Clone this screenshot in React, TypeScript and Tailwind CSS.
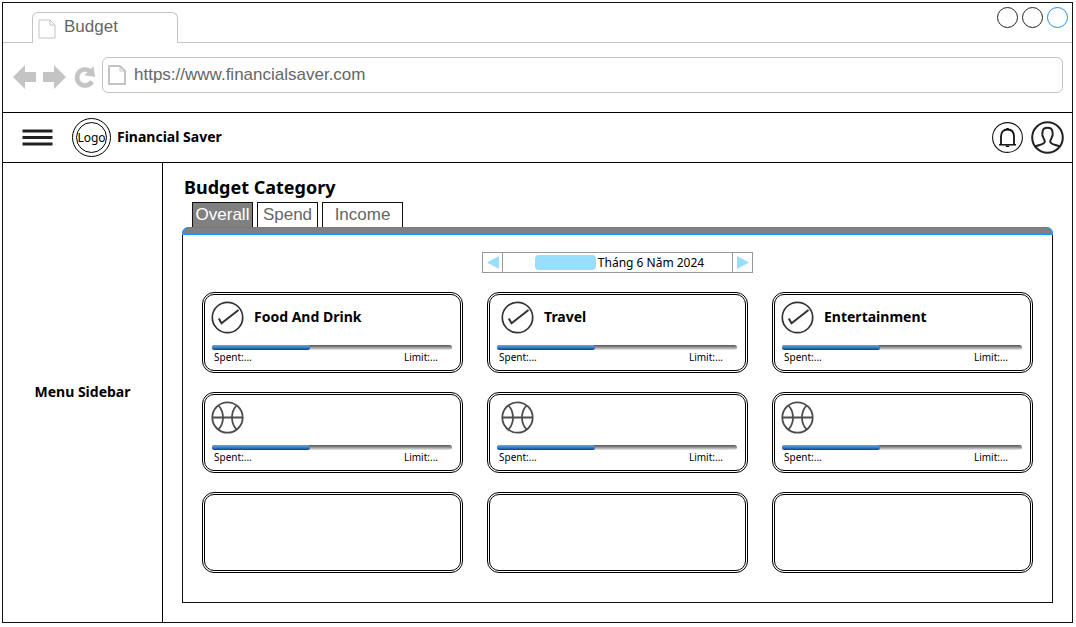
import type { ReactNode } from 'react';

type Category = { name: string; icon: 'check' | 'ball'; indented?: boolean; id: string };

const categories: Category[] = [
  { id: 'food', name: 'Food And Drink', icon: 'check' },
  { id: 'travel', name: 'Travel', icon: 'check', indented: true },
  { id: 'entertainment', name: 'Entertainment', icon: 'check' },
  { id: 'custom-1', name: '', icon: 'ball' },
  { id: 'custom-2', name: '', icon: 'ball', indented: true },
  { id: 'custom-3', name: '', icon: 'ball' },
];

const emptySlots = ['slot-1', 'slot-2', 'slot-3'];

function PageIcon({ className, strokeWidth }: { className: string; strokeWidth: number }) {
  return (
    <svg className={className} viewBox="0 0 18 20" fill="none" stroke="#c4c4c4" strokeWidth={strokeWidth} aria-hidden="true">
      <path d="M1 1H12L17 6V19H1Z" />
      <path d="M12 1V6H17" strokeWidth="1" />
    </svg>
  );
}

function CheckIcon() {
  return (
    <svg className="size-[33px] shrink-0" viewBox="0 0 33 33" fill="none" stroke="#333" strokeWidth="1.7" aria-hidden="true">
      <circle cx="16.5" cy="16.5" r="15.2" />
      <path d="M7.8 17.5L10.5 22.3L27.5 9" strokeWidth="2" />
    </svg>
  );
}

function BallIcon() {
  return (
    <svg className="size-[33px] shrink-0" viewBox="0 0 33 33" fill="none" stroke="#4d4d4d" strokeWidth="1.8" aria-hidden="true">
      <circle cx="16.5" cy="16.5" r="15.2" />
      <path d="M1 16.5H32M7.5 4.5C13.5 11 13.5 22 7.5 28.5M25.500 4.5C19.5 11 19.5 22 25.5 28.5" />
    </svg>
  );
}

function Card({ children }: { children?: ReactNode }) {
  return <li className="h-[81px] rounded-xl border-[3px] border-double border-black px-1.5 pt-1.5">{children}</li>;
}

function CategoryCard({ category }: { category: Category }) {
  return (
    <Card>
      <div className={category.indented ? 'flex items-center gap-2.5 pl-[5px]' : 'flex items-center gap-2.5'}>
        {category.icon === 'check' ? <CheckIcon /> : <BallIcon />}
        <h2 className="pb-0.5 text-sm font-bold">{category.name}</h2>
      </div>
      <div
        role="progressbar"
        aria-label="Spent"
        aria-valuenow={41}
        className="mt-[11px] mr-0.5 ml-px h-[5px] rounded-full bg-linear-to-b from-[#555] via-[#999] to-[#eee]"
      >
        <div className="h-full w-[41%] rounded-full bg-linear-to-b from-[#6aa5e4] via-[#3f7cc4] to-[#08408c]" />
      </div>
      <div className="mt-px flex justify-between pr-4 pl-[3px] text-[10px] leading-3">
        <span>Spent:...</span>
        <span>Limit:...</span>
      </div>
    </Card>
  );
}

function BrowserChrome() {
  return (
    <div className="text-[#666]">
      <div className="flex h-10 justify-between border-b border-[#c4c4c4] pl-[29px]">
        <div className="-mb-px mt-[9px] flex w-[146px] items-start gap-2 rounded-t-md border border-b-0 border-[#c4c4c4] bg-white pt-1 pl-[5px]">
          <PageIcon className="mt-0.5 h-5 w-[18px]" strokeWidth={1} />
          <span className="font-['Liberation_Sans',sans-serif] text-[17px] leading-5">Budget</span>
        </div>
        <div className="flex gap-1 pt-1 pr-1">
          <button aria-label="Minimize" className="size-[21px] rounded-full border border-[#222]" />
          <button aria-label="Maximize" className="size-[21px] rounded-full border border-[#222]" />
          <button aria-label="Close" className="size-[21px] rounded-full border border-[#1890ff]" />
        </div>
      </div>
      <div className="flex h-[69px] items-center pr-[9px] pb-1.5 pl-2.5">
        <button aria-label="Back" className="mt-1 mr-[7px]">
          <svg className="h-6 w-[23px]" viewBox="0 0 23 24" fill="#c4c4c4"><path d="M0 12L12 0V7H23V17H12V24Z" /></svg>
        </button>
        <button aria-label="Forward" className="mt-1 mr-2">
          <svg className="h-6 w-[23px]" viewBox="0 0 23 24" fill="#c4c4c4"><path d="M23 12L11 0V7H0V17H11V24Z" /></svg>
        </button>
        <button aria-label="Reload" className="mt-1 mr-1.5">
          <svg className="h-6 w-[22px]" viewBox="0 0 22 24" fill="none">
            <path d="M16 6.2A8 8 0 1 0 18 16.5" stroke="#c4c4c4" strokeWidth="4.6" />
            <path d="M19.500 1.200L21.200 12L10.500 10.200Z" fill="#c4c4c4" />
          </svg>
        </button>
        <label className="flex h-9 flex-1 items-center gap-2 rounded-md border border-[#c4c4c4] pl-[5px]">
          <PageIcon className="h-5 w-[18px]" strokeWidth={2} />
          <input
            aria-label="Address"
            className="w-full flex-1 font-['Liberation_Sans',sans-serif] text-[17px] leading-5 outline-none"
            defaultValue="https://www.financialsaver.com"
          />
        </label>
      </div>
    </div>
  );
}

function AppHeader() {
  return (
    <header className="flex h-[51px] items-center border-y border-black pr-2 pl-[19px]">
      <button aria-label="Menu" className="mr-[19px]">
        <svg className="h-[17px] w-[31px]" viewBox="0 0 31 17" fill="#222"><path d="M0.500 0.500H30.500V3.500H0.500ZM0.500 7H30.500V10H0.500ZM0.500 13.500H30.500V16.500H0.500Z" /></svg>
      </button>
      <div className="mr-1.5 flex size-[39px] items-center justify-center rounded-full border border-black">
        <div className="flex size-[31px] items-center justify-center rounded-full border border-black text-xs">Logo</div>
      </div>
      <span className="pb-0.5 text-sm font-bold">Financial Saver</span>
      <div className="ml-auto flex items-center gap-2">
        <button aria-label="Notifications">
          <svg className="size-[31px]" viewBox="0 0 31 31" fill="none" stroke="#111">
            <circle cx="15.500" cy="15.500" r="14.900" strokeWidth="1.100" />
            <path d="M7 22.800H24" strokeWidth="1.500" />
            <path d="M9 22.800V14.500C9 10 11.500 7.500 15.500 7.500S22 10 22 14.500V22.800" strokeWidth="1.800" />
            <path d="M14.300 6.800H16.700M13.800 24.200H17.200" strokeWidth="1.400" />
          </svg>
        </button>
        <button aria-label="Account">
          <svg className="size-[33px]" viewBox="0 0 33 33" fill="none" stroke="#222" strokeWidth="2">
            <circle cx="16.500" cy="16.500" r="15.300" />
            <path d="M4.500 25.500C7 23.500 13.800 24 13.800 20.500C13.800 18.500 12.200 18 12 15.500C10.800 14.500 11.300 13 11.500 11C11.700 8 13.500 6.800 16.500 6.800S21.300 8 21.500 11C21.700 13 22.200 14.500 21 15.500C20.800 18 19.200 18.500 19.200 20.500C19.200 24 26 23.500 28.500 25.500" />
          </svg>
        </button>
      </div>
    </header>
  );
}

function Tab({ label, width, selected = false }: { label: string; width: string; selected?: boolean }) {
  const tone = selected ? 'bg-[#808080] text-white' : 'bg-white text-[#666]';
  return (
    <button
      role="tab"
      aria-selected={selected}
      className={`${width} ${tone} h-[25px] border border-b-0 border-[#111] text-center font-['Liberation_Sans',sans-serif] text-[17px] leading-6`}
    >
      {label}
    </button>
  );
}

function MonthPicker() {
  return (
    <div className="mx-auto flex h-[21px] w-[271px] border border-[#999]">
      <button aria-label="Previous month" className="flex w-5 items-center justify-center border-r border-[#999]">
        <svg className="h-[13px] w-3" viewBox="0 0 12 12" preserveAspectRatio="none" fill="#99ddff"><path d="M0 6L12 0V12Z" /></svg>
      </button>
      <div className="flex flex-1 items-center justify-center gap-0.5 pl-1 text-xs">
        <span className="h-[15px] w-[61px] rounded bg-[#99ddff]" />
        <span>Tháng 6 Năm 2024</span>
      </div>
      <button aria-label="Next month" className="flex w-5 items-center justify-center border-l border-[#999]">
        <svg className="h-[13px] w-3" viewBox="0 0 12 12" preserveAspectRatio="none" fill="#99ddff"><path d="M12 6L0 0V12Z" /></svg>
      </button>
    </div>
  );
}

export default function App() {
  return (
    <div className="flex min-h-screen bg-white pt-0.5 pr-[3px] pb-1 pl-0.5 font-['Noto_Sans',sans-serif] text-black">
      <div className="flex flex-1 flex-col border border-[#111]">
        <BrowserChrome />
        <AppHeader />
        <div className="flex flex-1">
          <nav className="flex w-40 shrink-0 items-center justify-center border-r border-black pb-0.5 text-sm font-bold">
            Menu Sidebar
          </nav>
          <main className="flex flex-1 flex-col px-[19px] pt-[11px] pb-[19px]">
            <h1 className="pb-px pl-0.5 text-lg leading-[27px] font-bold">Budget Category</h1>
            <div role="tablist" className="flex gap-1 pl-2.5">
              <Tab label="Overall" width="w-[61px]" selected />
              <Tab label="Spend" width="w-[61px]" />
              <Tab label="Income" width="w-[81px]" />
            </div>
            <div className="h-2 rounded-t-md border border-[#1890ff] bg-[#808080]" />
            <section className="flex-1 border border-t-0 border-[#111] px-[19px] pt-[17px] pb-[29px]">
              <MonthPicker />
              <ul className="mt-[19px] grid grid-cols-3 gap-x-6 gap-y-[19px]">
                {categories.map((category) => (
                  <CategoryCard key={category.id} category={category} />
                ))}
                {emptySlots.map((slot) => (
                  <Card key={slot} />
                ))}
              </ul>
            </section>
          </main>
        </div>
      </div>
    </div>
  );
}
